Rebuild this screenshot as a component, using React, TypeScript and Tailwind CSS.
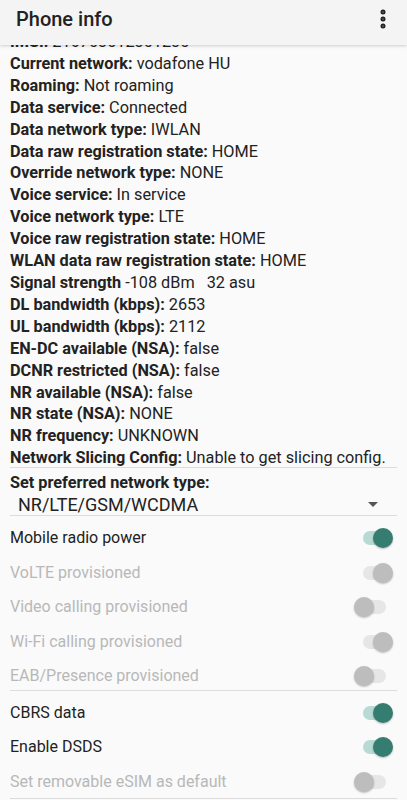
import { EllipsisVertical } from "lucide-react";

type Info = { label: string; value: string };

const infoRows: Info[] = [
  { label: "IMSI:", value: "216703012301230" },
  { label: "Current network:", value: "vodafone HU" },
  { label: "Roaming:", value: "Not roaming" },
  { label: "Data service:", value: "Connected" },
  { label: "Data network type:", value: "IWLAN" },
  { label: "Data raw registration state:", value: "HOME" },
  { label: "Override network type:", value: "NONE" },
  { label: "Voice service:", value: "In service" },
  { label: "Voice network type:", value: "LTE" },
  { label: "Voice raw registration state:", value: "HOME" },
  { label: "WLAN data raw registration state:", value: "HOME" },
  { label: "Signal strength", value: "-108 dBm\u00a0\u00a0\u00a032 asu" },
  { label: "DL bandwidth (kbps):", value: "2653" },
  { label: "UL bandwidth (kbps):", value: "2112" },
  { label: "EN-DC available (NSA):", value: "false" },
  { label: "DCNR restricted (NSA):", value: "false" },
  { label: "NR available (NSA):", value: "false" },
  { label: "NR state (NSA):", value: "NONE" },
  { label: "NR frequency:", value: "UNKNOWN" },
  { label: "Network Slicing Config:", value: "Unable to get slicing config." },
];

type Toggle = { label: string; on: boolean; disabled?: boolean };

const radioToggles: Toggle[] = [
  { label: "Mobile radio power", on: true },
  { label: "VoLTE provisioned", on: true, disabled: true },
  { label: "Video calling provisioned", on: false, disabled: true },
  { label: "Wi-Fi calling provisioned", on: true, disabled: true },
  { label: "EAB/Presence provisioned", on: false, disabled: true },
];

const extraToggles: Toggle[] = [
  { label: "CBRS data", on: true },
  { label: "Enable DSDS", on: true },
  { label: "Set removable eSIM as default", on: false, disabled: true },
];

function Switch({ on, disabled }: { on: boolean; disabled?: boolean }) {
  const track = disabled ? "bg-[#e6e6e6]" : on ? "bg-[#b8dad4]" : "bg-[#e0e0e0]";
  const thumb = disabled ? "bg-[#bdbdbd]" : on ? "bg-[#367d71]" : "bg-[#f1f1f1]";
  return (
    <div className={`relative w-[23px] h-[14px] rounded-full ${track}`}>
      <div
        className={`absolute top-[-3px] w-[20px] h-[20px] rounded-full shadow-[0_1px_2px_rgba(0,0,0,0.25)] ${thumb} ${
          on ? "left-[10px]" : "left-[-9px]"
        }`}
      />
    </div>
  );
}

function ToggleRow({ label, on, disabled }: Toggle) {
  return (
    <div className="flex items-center justify-between h-[34.5px] pr-[11px]">
      <span className={`text-[16px] ${disabled ? "text-[#b8b8b8]" : "text-[#222]"}`}>{label}</span>
      <Switch on={on} disabled={disabled} />
    </div>
  );
}

export default function App() {
  return (
    <div
      className="relative w-[407px] h-[800px] overflow-hidden bg-[#fafafa] text-[#222]"
      style={{ fontFamily: "Roboto, 'Noto Sans', sans-serif" }}
    >
      {/* App bar, drawn over the scrolled list */}
      <div className="absolute top-0 left-0 right-0 z-10 h-[45px] bg-[#f4f4f4] shadow-[0_1px_3px_rgba(0,0,0,0.18)] flex items-start justify-between pl-[16px] pr-[12px]">
        <h1 className="mt-[6px] text-[20px] font-medium leading-[26px] text-[#222]">Phone info</h1>
        <EllipsisVertical className="mt-[7px] w-[24px] h-[24px] text-[#222]" strokeWidth={3} />
      </div>

      <div className="pt-[31px] px-[10px]">
        {infoRows.map((r) => (
          <div key={r.label} className="text-[16.25px] leading-[21.9px] whitespace-nowrap">
            <span className="font-bold">{r.label}</span> <span>{r.value}</span>
          </div>
        ))}

        <div className="-mt-[2px] border-t border-[#dcdcdc]" />

        <div className="pt-[4px] text-[16.25px] leading-[22px] font-bold">Set preferred network type:</div>
        <div className="flex items-center justify-between h-[22px] pl-[8px] pr-[19px] border-b border-[#dcdcdc]">
          <span className="text-[18px] leading-[22px]">NR/LTE/GSM/WCDMA</span>
          <span className="w-0 h-0 border-l-[5px] border-r-[5px] border-t-[5px] border-l-transparent border-r-transparent border-t-[#555]" />
        </div>

        <div className="pt-[5px]">
          {radioToggles.map((t) => (
            <ToggleRow key={t.label} {...t} />
          ))}
        </div>
        <div className="-mt-[4px] border-t border-[#dcdcdc]" />
        <div className="pt-[5px]">
          {extraToggles.map((t) => (
            <ToggleRow key={t.label} {...t} />
          ))}
        </div>
        <div className="-mt-[1px] border-t border-[#dcdcdc]" />
      </div>
    </div>
  );
}
